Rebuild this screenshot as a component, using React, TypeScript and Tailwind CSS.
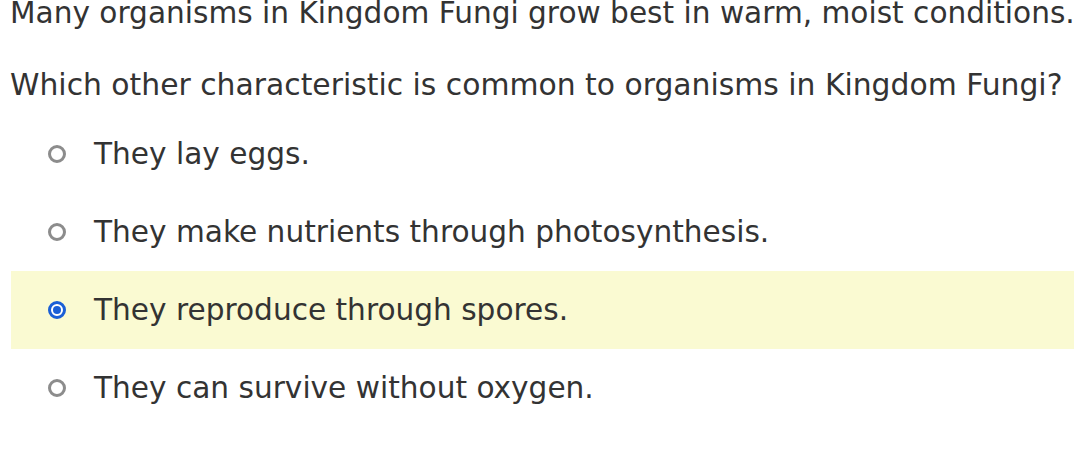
import React from "react";

const options = [
  "They lay eggs.",
  "They make nutrients through photosynthesis.",
  "They reproduce through spores.",
  "They can survive without oxygen.",
];

function Radio({ checked }: { checked: boolean }) {
  if (checked) {
    return (
      <span className="flex h-[18px] w-[18px] items-center justify-center rounded-full border-[3px] border-[#1a5fd6] bg-white">
        <span className="h-[8px] w-[8px] rounded-full bg-[#1a5fd6]" />
      </span>
    );
  }
  return <span className="block h-[18px] w-[18px] rounded-full border-[3px] border-[#8c8c8c] bg-white" />;
}

export default function App() {
  return (
    <div
      className="h-[457px] w-[1074px] overflow-hidden bg-white text-[#333333]"
      style={{ fontFamily: '"DejaVu Sans", sans-serif' }}
    >
      <div className="pl-[10px]">
        <p className="whitespace-nowrap text-[29.6px] leading-[28px] mt-[-1px]">
          Many organisms in Kingdom Fungi grow best in warm, moist conditions.
        </p>
        <p className="mt-[38px] whitespace-nowrap text-[29.8px] leading-[40px]">
          Which other characteristic is common to organisms in Kingdom Fungi?
        </p>
      </div>
      <div className="mt-[10px] pl-[11px]">
        {options.map((o, i) => (
          <div
            key={o}
            className={`flex h-[78px] items-center ${i === 2 ? "bg-[#fafad2]" : ""}`}
          >
            <div className="ml-[37px] mr-[28px] flex items-center">
              <Radio checked={i === 2} />
            </div>
            <span className="whitespace-nowrap text-[29.6px]">{o}</span>
          </div>
        ))}
      </div>
    </div>
  );
}
